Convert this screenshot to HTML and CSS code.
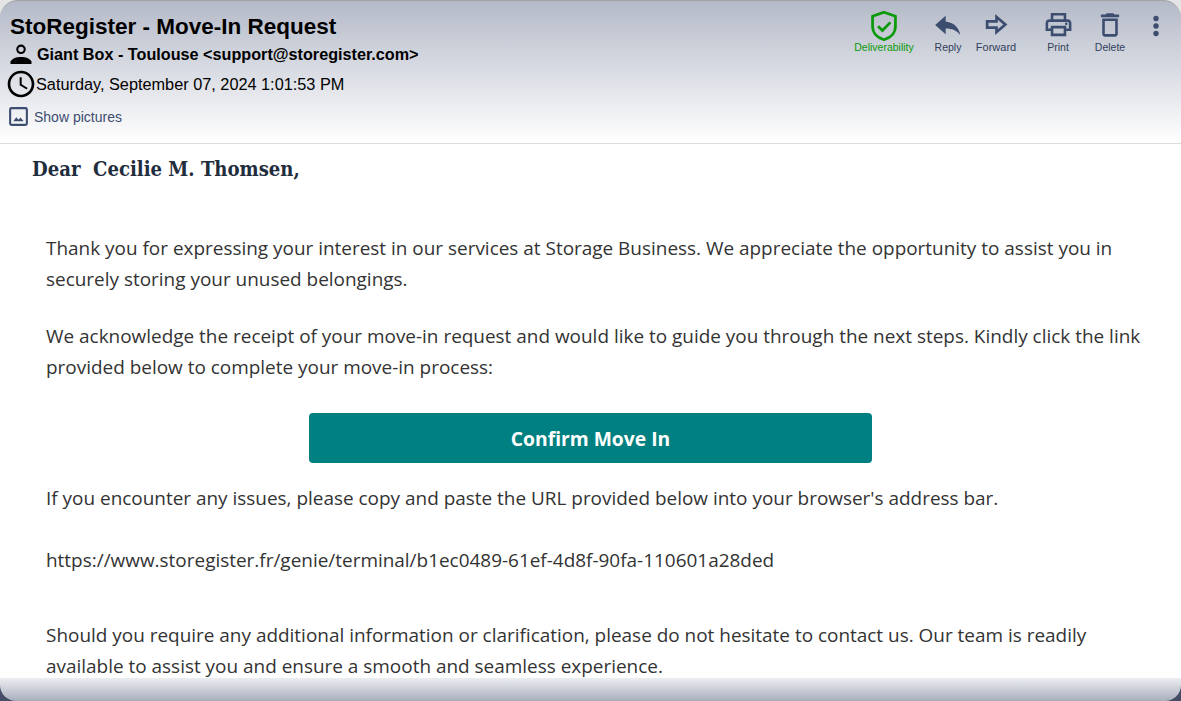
FILE: index.html
```html
<!DOCTYPE html>
<html lang="en">
<head>
    <meta charset="UTF-8">
    <meta name="viewport" content="width=device-width, initial-scale=1.0">
    <title>StoRegister - Move-In Request</title>
    <link rel="stylesheet" href="styles.css">
</head>
<body>
<div class="window">
    <!-- Message header -->
    <header class="mail-header">
        <div class="mail-meta">
            <h1 class="subject">StoRegister - Move-In Request</h1>
            <div class="meta-row sender">
                <svg class="meta-icon" viewBox="0 0 24 24"><circle cx="12" cy="8" r="3.200" fill="none" stroke="#000" stroke-width="1.800"/><path d="M3 20.500v-2C4.500 15.500 8 14.500 12 14.500s7.500 1 9 4v2z" fill="#000"/></svg>
                <span>Giant Box - Toulouse &lt;support@storegister.com&gt;</span>
            </div>
            <div class="meta-row sent">
                <svg class="clock-icon" viewBox="0 0 24 24"><path d="M11.990 2C6.470 2 2 6.480 2 12s4.470 10 9.990 10C17.520 22 22 17.520 22 12S17.520 2 11.990 2zM12 20c-4.420 0-8-3.580-8-8s3.580-8 8-8 8 3.580 8 8-3.580 8-8 8zm.5-13H11v6l5.250 3.150.75-1.230-4.500-2.670z" fill="#000"/></svg>
                <span>Saturday, September 07, 2024 1:01:53 PM</span>
            </div>
            <div class="show-pictures">
                <svg class="picture-icon" viewBox="0 0 20 20"><rect x="1.200" y="1.200" width="17.600" height="17.600" rx="1.500" fill="none" stroke="#3d4d70" stroke-width="2.200"/><path d="M4.500 15l3.200-4.200 2.300 2.700 2-2.500 3.500 4z" fill="#3d4d70"/></svg>
                <span>Show pictures</span>
            </div>
        </div>
        <nav class="actions">
            <div class="action action-deliverability">
                <svg viewBox="0 0 24 28"><path d="M12 2l10 3.500v9c0 5.500-4.200 9.800-10 11.500C6.200 24.300 2 20 2 14.500v-9z" fill="none" stroke="#0a9a0a" stroke-width="2.400"/><path d="M6.800 14.200l3.800 3.800 7-7.200" fill="none" stroke="#0a9a0a" stroke-width="2.400"/></svg>
                <span>Deliverability</span>
            </div>
            <div class="action action-reply">
                <svg viewBox="0 0 24 24"><path d="M10 9V4l-9 8 9 8v-5.100c5.500 0 9.500 1.700 12.500 5.600C21.500 15 18 10 10 9z" fill="#3d4d70"/></svg>
                <span>Reply</span>
            </div>
            <div class="action action-forward">
                <svg viewBox="0 0 24 24"><path d="M3 9h9V4.800L20.500 12 12 19.200V15H3z" fill="none" stroke="#3d4d70" stroke-width="2.600"/></svg>
                <span>Forward</span>
            </div>
            <div class="action action-print">
                <svg viewBox="0 0 24 24"><path d="M19 8h-1V3H6v5H5c-1.700 0-3 1.300-3 3v6h4v4h12v-4h4v-6c0-1.700-1.300-3-3-3zM8 5h8v3H8zm8 14H8v-4h8zm4-4h-2v-2H6v2H4v-4c0-.6.4-1 1-1h14c.6 0 1 .4 1 1z" fill="#3d4d70"/><circle cx="18" cy="11.500" r="1" fill="#3d4d70"/></svg>
                <span>Print</span>
            </div>
            <div class="action action-delete">
                <svg viewBox="0 0 24 24"><path d="M6 19c0 1.100.9 2 2 2h8c1.100 0 2-.9 2-2V7H6zM8 9h8v10H8zm7.500-5l-1-1h-5l-1 1H5v2h14V4z" fill="#3d4d70" transform="translate(-2.400 -2.400) scale(1.200)"/></svg>
                <span>Delete</span>
            </div>
            <div class="action action-more">
                <svg viewBox="0 0 8 24"><circle cx="4" cy="4.500" r="2.700" fill="#3d4d70"/><circle cx="4" cy="12" r="2.700" fill="#3d4d70"/><circle cx="4" cy="19.500" r="2.700" fill="#3d4d70"/></svg>
            </div>
        </nav>
    </header>

    <!-- Message body -->
    <main class="mail-body">
        <p class="greeting">Dear&nbsp; Cecilie M. Thomsen,</p>
        <div class="content">
            <p>Thank you for expressing your interest in our services at Storage Business. We appreciate the opportunity to assist you in securely storing your unused belongings.</p>
            <p>We acknowledge the receipt of your move-in request and would like to guide you through the next steps. Kindly click the link provided below to complete your move-in process:</p>
            <a class="confirm-btn" href="#">Confirm Move In</a>
            <p class="after-btn">If you encounter any issues, please copy and paste the URL provided below into your browser's address bar.</p>
            <p class="url">https://www.storegister.fr/genie/terminal/b1ec0489-61ef-4d8f-90fa-110601a28ded</p>
            <p class="closing">Should you require any additional information or clarification, please do not hesitate to contact us. Our team is readily available to assist you and ensure a smooth and seamless experience.</p>
        </div>
    </main>

    <footer class="mail-footer"></footer>
</div>
</body>
</html>
```

FILE: styles.css
```css
html, body {
    margin: 0;
    padding: 0;
    height: 100%;
}

body {
    background: linear-gradient(#e4e4e4 50%, #454c66 50%);
    overflow: hidden;
}

.window {
    height: 701px;
    display: flex;
    flex-direction: column;
}

.mail-header {
    flex: none;
    height: 142px;
    display: flex;
    justify-content: space-between;
    background: linear-gradient(#b4bac8, #ffffff);
    border-top: 1px solid #a3a3a3;
    border-bottom: 1px solid #dcdcdc;
    border-radius: 18px 18px 0 0;
    font-family: "Liberation Sans", Arial, sans-serif;
}

.mail-meta {
    padding: 12px 0 0 8px;
}

.subject {
    margin: 0 0 0 2px;
    font-size: 22.500px;
    line-height: 27px;
    font-weight: bold;
    color: #000;
}

.meta-row {
    display: flex;
    align-items: center;
    color: #000;
    font-size: 16.200px;
}

.sender {
    height: 26px;
    margin-top: 1px;
    font-weight: bold;
}

.meta-icon {
    width: 28px;
    height: 28px;
    margin-left: -1px;
    margin-right: 2px;
}

.sent {
    height: 30px;
    margin-top: 2px;
    font-size: 16.300px;
}

.clock-icon {
    width: 32px;
    height: 32px;
    margin: 0 -1px 0 -3px;
}

.show-pictures {
    display: flex;
    align-items: center;
    gap: 6px;
    margin-top: 8px;
    margin-left: 1px;
    font-size: 14px;
    color: #3d4d70;
}

.picture-icon {
    width: 19px;
    height: 19px;
}

.actions {
    display: flex;
    padding: 10px 17px 0 0;
}

.action {
    width: 50px;
    display: flex;
    flex-direction: column;
    align-items: center;
    font-size: 10.500px;
    color: #333f5c;
    white-space: nowrap;
}

.action svg {
    width: 28px;
    height: 28px;
    margin-bottom: 2px;
}

.action-deliverability {
    color: #0a9a0a;
}

.action-deliverability svg {
    width: 28px;
    height: 32px;
    margin-top: -1px;
    margin-bottom: -1px;
}

.action-reply {
    margin-left: 14px;
}

.action-forward {
    margin-left: -2px;
    font-size: 11px;
}

.action-forward svg {
    width: 25px;
    height: 25px;
    margin-top: 1px;
    margin-bottom: 4px;
}

.action-print {
    margin-left: 12px;
}

.action-print svg {
    width: 31px;
    height: 31px;
    margin-top: -2px;
    margin-bottom: 1px;
}

.action-delete {
    margin-left: 2px;
}

.action-delete svg {
    width: 26px;
    height: 26px;
    margin-top: 1px;
    margin-bottom: 3px;
}

.action-more {
    width: 16px;
    margin-left: 13px;
}

.action-more svg {
    width: 8px;
    height: 24px;
    margin-top: 3px;
}

.mail-body {
    flex: 1;
    min-height: 0;
    overflow: hidden;
    background: #fff;
    color: #333;
    font-family: "Open Sans", sans-serif;
    font-size: 18.950px;
    line-height: 31px;
}

.greeting {
    margin: 11px 0 0 32px;
    font-family: "DejaVu Serif", serif;
    font-stretch: condensed;
    font-size: 20.100px;
    line-height: 28px;
    font-weight: bold;
    color: #1f2d3d;
}

.content {
    padding: 50px 20px 0 46px;
}

.content p {
    margin: 0 0 26px;
}

.confirm-btn {
    display: block;
    width: 563px;
    height: 50px;
    margin: 30px 0 0 263px;
    background: #008080;
    border-radius: 4px;
    color: #fff;
    font-size: 19.300px;
    font-weight: bold;
    line-height: 52px;
    text-align: center;
    text-decoration: none;
}

.content .after-btn {
    margin: 20px 0 31px;
}

.content .url {
    margin-bottom: 44px;
}

.mail-footer {
    flex: none;
    height: 23px;
    background: linear-gradient(#eceef1, #a9aebd);
    border-radius: 0 0 16px 16px;
}
```
